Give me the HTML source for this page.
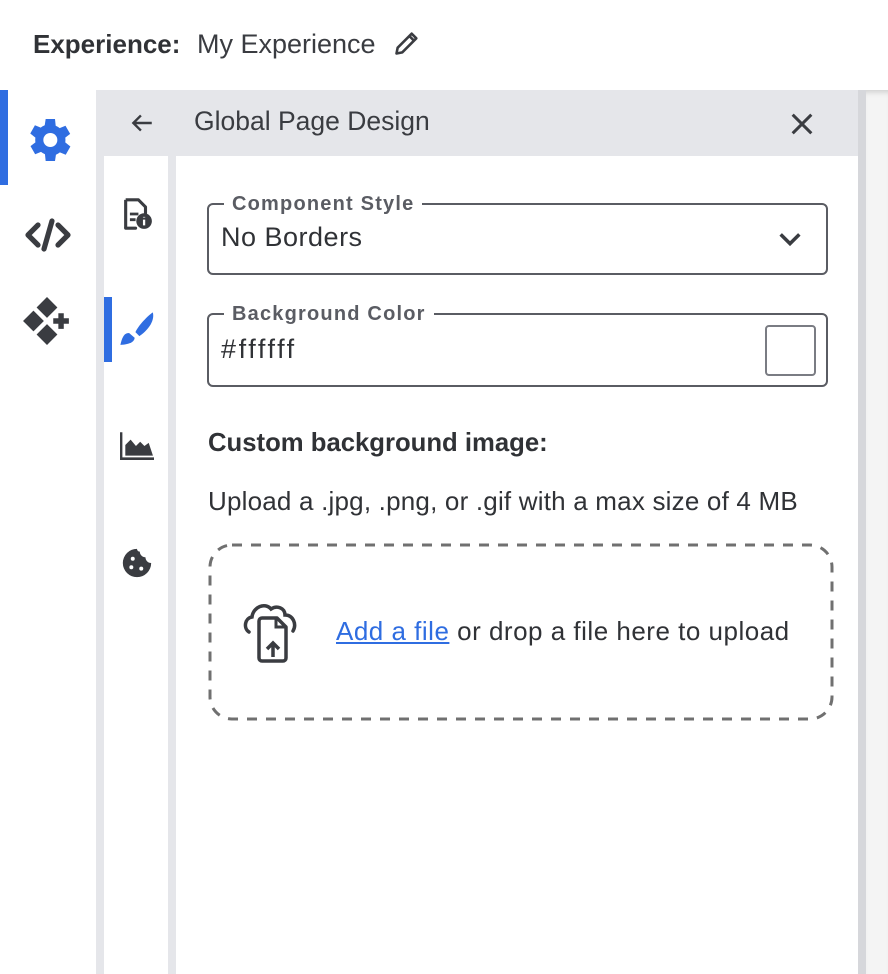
<!DOCTYPE html>
<html><head><meta charset="utf-8"><style>
*{margin:0;padding:0;box-sizing:border-box}
body{width:888px;height:974px;overflow:hidden;background:#fff;font-family:"Liberation Sans",sans-serif;color:#303236;position:relative}
.a{position:absolute;white-space:nowrap}
</style></head><body>
<div class="a" style="left:33px;top:27px;font-size:26px;line-height:34px"><b style="color:#303236">Experience:</b></div>
<div class="a" style="left:197px;top:27px;font-size:27px;line-height:34px;color:#3a3c41">My Experience</div>
<svg class="a" style="left:393px;top:29px" width="28" height="28" viewBox="0 0 24 24"><path d="M3 21l1-5L16 4l4 4L8 20z M14 6l4 4" fill="none" stroke="#3a3c41" stroke-width="2.2" stroke-linejoin="round"/></svg>

<div class="a" style="left:0;top:90px;width:8px;height:95px;background:#2f6de1"></div>
<svg class="a" style="left:20px;top:112px" width="56" height="56" viewBox="0 0 24 24"><path fill="#2f6de1" d="M19.4 13a7.5 7.5 0 000-2l2.1-1.6-2-3.5-2.5 1a7 7 0 00-1.7-1L15 3h-4l-.4 2.7a7 7 0 00-1.7 1l-2.5-1-2 3.5L6.6 11a7.5 7.5 0 000 2l-2.1 1.6 2 3.5 2.5-1a7 7 0 001.7 1L11 21h4l.4-2.7a7 7 0 001.7-1l2.5 1 2-3.5z"/><circle cx="13" cy="12" r="3" fill="#fff"/></svg>
<svg class="a" style="left:24px;top:215px" width="48" height="40" viewBox="0 0 24 20"><path d="M7 5L2 10l5 5M17 5l5 5-5 5M14 3l-4 14" fill="none" stroke="#3a3c41" stroke-width="2.6" stroke-linecap="round" stroke-linejoin="round"/></svg>
<svg class="a" style="left:22px;top:296px" width="50" height="50" viewBox="0 0 24 24"><g fill="#3a3c41"><path d="M12 0.5l5 5-5 5-5-5z"/><path d="M5.5 7l5 5-5 5-5-5z"/><path d="M12 13.5l5 5-5 5-5-5z"/></g><path d="M15 12h7.5M18.75 8.25v7.5" stroke="#3a3c41" stroke-width="2.6"/></svg>

<div class="a" style="left:96px;top:90px;width:762px;height:66px;background:#e5e6ea"></div>
<svg class="a" style="left:128px;top:110px" width="28" height="26" viewBox="0 0 24 24"><path d="M21 12H4M11 5l-7 7 7 7" fill="none" stroke="#3a3c41" stroke-width="2.2"/></svg>
<div class="a" style="left:194px;top:104px;font-size:26.5px;color:#3a3c41;line-height:34px">Global Page Design</div>
<svg class="a" style="left:788px;top:110px" width="28" height="28" viewBox="0 0 24 24"><path d="M4 4l16 16M20 4L4 20" stroke="#3a3c41" stroke-width="2.6"/></svg>

<div class="a" style="left:96px;top:156px;width:8px;height:818px;background:#e5e6ea"></div>
<div class="a" style="left:168px;top:156px;width:8px;height:818px;background:#e5e6ea"></div>
<div class="a" style="left:858px;top:90px;width:8px;height:884px;background:#d6d7db"></div>
<div class="a" style="left:866px;top:90px;width:22px;height:884px;background:#f4f4f4;box-shadow:inset 0 6px 6px -4px #ccc"></div>
<div class="a" style="left:104px;top:297px;width:8px;height:65px;background:#2f6de1"></div>

<svg class="a" style="left:120px;top:197px" width="34" height="34" viewBox="0 0 24 24"><path d="M4 2h9l5 5v5M11 22H4z" fill="none" stroke="#3a3c41" stroke-width="2.2" stroke-linejoin="round"/><path d="M4 2v20" stroke="#3a3c41" stroke-width="2.2"/><path d="M7 12h6M7 16h4" stroke="#3a3c41" stroke-width="2"/><circle cx="17" cy="17" r="5.5" fill="#3a3c41"/><path d="M17 16v4M17 14v.5" stroke="#fff" stroke-width="1.6"/></svg>
<svg class="a" style="left:118px;top:310px" width="38" height="38" viewBox="0 0 24 24"><path d="M22 1.5c-3 2-9 8-11 12.5l2.5 2.5c4.5-3 10-9 8.5-15z" fill="#2f6de1"/><path d="M7 14.5c-3.5 0-4.5 3.5-5.5 7.5 3 0 9-1 9-4.5z" fill="#2f6de1"/></svg>
<svg class="a" style="left:120px;top:432px" width="34" height="28" viewBox="0 0 32 26"><path d="M1 0v25h31" fill="none" stroke="#3a3c41" stroke-width="2.5"/><path d="M5 22V12l5-5 5 6 4-4 4 4 4-3 4 12z" fill="#3a3c41"/></svg>
<svg class="a" style="left:120px;top:546px" width="34" height="34" viewBox="0 0 24 24"><path d="M12 2a10 10 0 1010 10 4 4 0 01-4-4 4 4 0 01-4-4 2 2 0 01-2-2z" fill="#3a3c41"/><circle cx="9" cy="9" r="1.4" fill="#fff"/><circle cx="8" cy="15" r="1.4" fill="#fff"/><circle cx="15" cy="16" r="1.4" fill="#fff"/></svg>

<div class="a" style="left:207px;top:203px;width:621px;height:72px;border:2px solid #5a5c63;border-radius:6px"></div>
<div class="a" style="left:224px;top:193px;background:#fff;padding:0 8px;font-size:20px;font-weight:bold;color:#5a5c63;letter-spacing:1.2px">Component Style</div>
<div class="a" style="left:221px;top:222px;font-size:27px;color:#303236;letter-spacing:0.5px">No Borders</div>
<svg class="a" style="left:776px;top:228px" width="28" height="22" viewBox="0 0 24 18"><path d="M4 5l8 8 8-8" fill="none" stroke="#3a3c41" stroke-width="3"/></svg>

<div class="a" style="left:207px;top:313px;width:621px;height:74px;border:2px solid #5a5c63;border-radius:6px"></div>
<div class="a" style="left:224px;top:303px;background:#fff;padding:0 8px;font-size:20px;font-weight:bold;color:#5a5c63;letter-spacing:1.2px">Background Color</div>
<div class="a" style="left:221px;top:334px;font-size:27px;color:#303236;letter-spacing:2.6px">#ffffff</div>
<div class="a" style="left:765px;top:325px;width:51px;height:51px;border:2px solid #7a7c83;border-radius:4px"></div>

<div class="a" style="left:208px;top:429px;font-size:25.7px;font-weight:bold;color:#303236">Custom background image:</div>
<div class="a" style="left:208px;top:486px;font-size:26px;color:#303236;letter-spacing:0.2px">Upload a .jpg, .png, or .gif with a max size of 4 MB</div>

<svg class="a" style="left:207px;top:542px" width="628" height="180"><rect x="3" y="3" width="622" height="174" rx="22" fill="none" stroke="#707070" stroke-width="3" stroke-dasharray="10 9"/></svg>
<svg class="a" style="left:243px;top:598px" width="62" height="68" viewBox="0 0 62 68"><path d="M6 34C0 30 2 20 9 19 10 9 22 4 28 11 34 7 42 10 42 17 50 17 54 26 50 33" fill="none" stroke="#3a3c41" stroke-width="3.5" stroke-linecap="round"/><path d="M19 20h15l9 9v31a3 3 0 01-3 3H19a3 3 0 01-3-3V23a3 3 0 013-3z" fill="#fff" stroke="#3a3c41" stroke-width="3.5" stroke-linejoin="round"/><path d="M33 20v9h10" fill="none" stroke="#3a3c41" stroke-width="3"/><path d="M30 59V47M24 51l6-6 6 6" fill="none" stroke="#3a3c41" stroke-width="3.5"/></svg>
<div class="a" style="left:336px;top:616px;font-size:26px;color:#303236;letter-spacing:0.5px"><span style="color:#2f6de1;text-decoration:underline">Add a file</span> or drop a file here to upload</div>
</body></html>
